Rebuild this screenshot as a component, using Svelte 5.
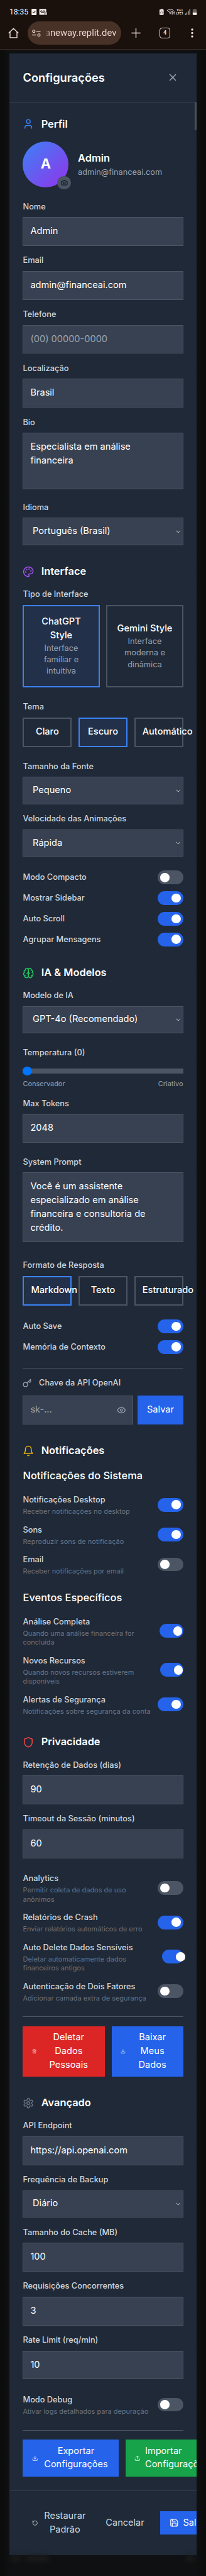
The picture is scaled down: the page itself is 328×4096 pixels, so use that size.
<script>
  const icons = {
    x: '<path d="M18 6 6 18"/><path d="m6 6 12 12"/>',
    user: '<path d="M19 21v-2a4 4 0 0 0-4-4H9a4 4 0 0 0-4 4v2"/><circle cx="12" cy="7" r="4"/>',
    camera: '<path d="M14.5 4h-5L7 7H4a2 2 0 0 0-2 2v9a2 2 0 0 0 2 2h16a2 2 0 0 0 2-2V9a2 2 0 0 0-2-2h-3l-2.5-3z"/><circle cx="12" cy="13" r="3"/>',
    palette: '<circle cx="13.5" cy="6.5" r=".5" fill="currentColor"/><circle cx="17.5" cy="10.5" r=".5" fill="currentColor"/><circle cx="8.5" cy="7.5" r=".5" fill="currentColor"/><circle cx="6.5" cy="12.5" r=".5" fill="currentColor"/><path d="M12 2C6.5 2 2 6.5 2 12s4.5 10 10 10c.926 0 1.648-.746 1.648-1.688 0-.437-.18-.835-.437-1.125-.29-.289-.438-.652-.438-1.125a1.64 1.64 0 0 1 1.668-1.668h1.996c3.051 0 5.555-2.503 5.555-5.554C21.965 6.012 17.461 2 12 2z"/>',
    brain: '<path d="M12 5a3 3 0 1 0-5.997.125 4 4 0 0 0-2.526 5.77 4 4 0 0 0 .556 6.588A4 4 0 1 0 12 18Z"/><path d="M12 5a3 3 0 1 1 5.997.125 4 4 0 0 1 2.526 5.77 4 4 0 0 1-.556 6.588A4 4 0 1 1 12 18Z"/><path d="M15 13a4.5 4.5 0 0 1-3-4 4.5 4.5 0 0 1-3 4"/><path d="M17.599 6.5a3 3 0 0 0 .399-1.375"/><path d="M6.003 5.125A3 3 0 0 0 6.401 6.5"/><path d="M3.477 10.896a4 4 0 0 1 .585-.396"/><path d="M19.938 10.5a4 4 0 0 1 .585.396"/><path d="M6 18a4 4 0 0 1-1.967-.516"/><path d="M19.967 17.484A4 4 0 0 1 18 18"/>',
    key: '<path d="m15.5 7.5 2.3 2.3a1 1 0 0 0 1.4 0l2.1-2.1a1 1 0 0 0 0-1.4L19 4"/><path d="m21 2-9.6 9.6"/><circle cx="7.5" cy="15.5" r="5.5"/>',
    eye: '<path d="M2.062 12.348a1 1 0 0 1 0-.696 10.75 10.75 0 0 1 19.876 0 1 1 0 0 1 0 .696 10.75 10.75 0 0 1-19.876 0"/><circle cx="12" cy="12" r="3"/>',
    bell: '<path d="M6 8a6 6 0 0 1 12 0c0 7 3 9 3 9H3s3-2 3-9"/><path d="M10.3 21a1.94 1.94 0 0 0 3.4 0"/>',
    shield: '<path d="M20 13c0 5-3.5 7.5-7.66 8.95a1 1 0 0 1-.67-.01C7.5 20.5 4 18 4 13V6a1 1 0 0 1 1-1c2 0 4.5-1.2 6.24-2.72a1.17 1.17 0 0 1 1.52 0C14.51 3.81 17 5 19 5a1 1 0 0 1 1 1z"/>',
    settings: '<path d="M12.22 2h-.44a2 2 0 0 0-2 2v.18a2 2 0 0 1-1 1.73l-.43.25a2 2 0 0 1-2 0l-.15-.08a2 2 0 0 0-2.73.73l-.22.38a2 2 0 0 0 .73 2.73l.15.1a2 2 0 0 1 1 1.72v.51a2 2 0 0 1-1 1.74l-.15.09a2 2 0 0 0-.73 2.73l.22.38a2 2 0 0 0 2.73.73l.15-.08a2 2 0 0 1 2 0l.43.25a2 2 0 0 1 1 1.73V20a2 2 0 0 0 2 2h.44a2 2 0 0 0 2-2v-.18a2 2 0 0 1 1-1.73l.43-.25a2 2 0 0 1 2 0l.15.08a2 2 0 0 0 2.73-.73l.22-.39a2 2 0 0 0-.73-2.73l-.15-.08a2 2 0 0 1-1-1.74v-.5a2 2 0 0 1 1-1.74l.15-.09a2 2 0 0 0 .73-2.73l-.22-.38a2 2 0 0 0-2.73-.73l-.15.08a2 2 0 0 1-2 0l-.43-.25a2 2 0 0 1-1-1.73V4a2 2 0 0 0-2-2z"/><circle cx="12" cy="12" r="3"/>',
    trash: '<path d="M3 6h18"/><path d="M19 6v14c0 1-1 2-2 2H7c-1 0-2-1-2-2V6"/><path d="M8 6V4c0-1 1-2 2-2h4c1 0 2 1 2 2v2"/><path d="M10 11v6"/><path d="M14 11v6"/>',
    download: '<path d="M21 15v4a2 2 0 0 1-2 2H5a2 2 0 0 1-2-2v-4"/><path d="m7 10 5 5 5-5"/><path d="M12 15V3"/>',
    upload: '<path d="M21 15v4a2 2 0 0 1-2 2H5a2 2 0 0 1-2-2v-4"/><path d="m17 8-5-5-5 5"/><path d="M12 3v12"/>',
    restore: '<path d="M3 12a9 9 0 1 0 9-9 9.75 9.75 0 0 0-6.74 2.74L3 8"/><path d="M3 3v5h5"/>',
    save: '<path d="M15.2 3a2 2 0 0 1 1.4.6l3.8 3.8a2 2 0 0 1 .6 1.4V19a2 2 0 0 1-2 2H5a2 2 0 0 1-2-2V5a2 2 0 0 1 2-2z"/><path d="M17 21v-7a1 1 0 0 0-1-1H8a1 1 0 0 0-1 1v7"/><path d="M7 3v4a1 1 0 0 0 1 1h7"/>'
  };

  const profileFields = [
    { label: 'Nome', value: 'Admin' },
    { label: 'Email', value: 'admin@financeai.com' },
    { label: 'Telefone', value: '(00) 00000-0000', empty: true },
    { label: 'Localização', value: 'Brasil' }
  ];
  const interfaceToggles = [
    { label: 'Modo Compacto', on: false },
    { label: 'Mostrar Sidebar', on: true },
    { label: 'Auto Scroll', on: true },
    { label: 'Agrupar Mensagens', on: true }
  ];
  const modelToggles = [
    { label: 'Auto Save', on: true },
    { label: 'Memória de Contexto', on: true }
  ];
  const systemNotices = [
    { label: 'Notificações Desktop', lines: ['Receber notificações no desktop'], on: true },
    { label: 'Sons', lines: ['Reproduzir sons de notificação'], on: true },
    { label: 'Email', lines: ['Receber notificações por email'], on: false }
  ];
  const eventNotices = [
    { label: 'Análise Completa', lines: ['Quando uma análise financeira for', 'concluída'], on: true, width: 41.5 },
    { label: 'Novos Recursos', lines: ['Quando novos recursos estiverem', 'disponíveis'], on: true, width: 40.2 },
    { label: 'Alertas de Segurança', lines: ['Notificações sobre segurança da conta'], on: true }
  ];
  const privacyToggles = [
    { label: 'Analytics', lines: ['Permitir coleta de dados de uso', 'anônimos'], on: false },
    { label: 'Relatórios de Crash', lines: ['Enviar relatórios automáticos de erro'], on: true },
    { label: 'Auto Delete Dados Sensíveis', lines: ['Deletar automaticamente dados', 'financeiros antigos'], on: true, width: 36.5 },
    { label: 'Autenticação de Dois Fatores', lines: ['Adicionar camada extra de segurança'], on: false }
  ];
  const debugToggle = [
    { label: 'Modo Debug', lines: ['Ativar logs detalhados para depuração'], on: false }
  ];
</script>

{#snippet icon(name, size, color)}
  <svg class="icon" viewBox="0 0 24 24" style="width:{size / 10}rem;height:{size / 10}rem;color:{color}">{@html icons[name]}</svg>
{/snippet}

{#snippet heading(name, color, text)}
  <h2>{@render icon(name, 20, color)}<span>{text}</span></h2>
{/snippet}

{#snippet field(label, value, empty = false)}
  <div class="field">
    <div class="label">{label}</div>
    <div class="input" class:empty>{value}</div>
  </div>
{/snippet}

{#snippet select(label, value)}
  <div class="field">
    <div class="label">{label}</div>
    <div class="select">
      <span>{value}</span>
      <svg class="chevron" viewBox="0 0 8 5"><path d="M.4.5 4 4.1 7.6.5" /></svg>
    </div>
  </div>
{/snippet}

{#snippet toggle(on, width = 44)}
  <span class="toggle" class:on style="width:{width / 10}rem"><i></i></span>
{/snippet}

{#snippet plainRows(rows)}
  <div class="rows">
    {#each rows as row}
      <div class="row"><span class="label">{row.label}</span>{@render toggle(row.on)}</div>
    {/each}
  </div>
{/snippet}

{#snippet detailRows(rows)}
  <div class="rows">
    {#each rows as row}
      <div class="row">
        <div class="detail">
          <span class="label">{row.label}</span>
          {#each row.lines as line}<p>{line}</p>{/each}
        </div>
        {@render toggle(row.on, row.width)}
      </div>
    {/each}
  </div>
{/snippet}

<div class="page">
  <div class="browser">
    <div class="status">
      <span class="clock">18:35</span>
      <svg class="left-icons" viewBox="0 0 26 10">
        <rect x=".2" y=".1" width="8" height="9.8" rx=".8" fill="#f2eeec" />
        <path d="m2.2 4.8 1.5 1.5 2.8-3" fill="none" stroke="#1a100c" stroke-width="1.1" />
        <rect x="12.6" y=".2" width="11" height="9.4" rx=".8" fill="#f2eeec" />
        <g fill="none" stroke="#1a100c" stroke-width=".9"><circle cx="15.9" cy="4.1" r="1.3" /><circle cx="20" cy="4.1" r="1.3" /><path d="M15.6 5.5h4.6" /></g>
        <rect x="20.6" y="5.2" width="4.4" height="4.6" rx=".6" fill="#f2eeec" stroke="#1a100c" stroke-width=".5" />
        <path d="M22.3 6.6h.7v2.2" fill="none" stroke="#1a100c" stroke-width=".6" />
      </svg>
      <svg class="right-icons" viewBox="0 0 60 10">
        <path d="M2 1V.2h3V1h.6q1 0 1 1v6.7q0 1-1 1H1q-1 0-1-1V2q0-1 1-1z" fill="#f2eeec" />
        <path d="M2.300 4.500 3.300 2.900 4.300 4.500M4.800 5.300l.7 1.500H4M3 6.800H1.200l.7-1.500" fill="none" stroke="#1a100c" stroke-width=".7" />
        <g fill="none" stroke="#f2eeec" stroke-width="1" stroke-linecap="round"><path d="M12.1 2.6q5-4 10 0M13.7 4.4q3.4-2.6 6.8 0M15.3 6.1q1.8-1.3 3.5 0" /><path d="M20.3 4.9v3.8m-1.1-1 1.1 1.1 1.1-1.1M23.2 8.6V4.8m-1.1 1L23.2 4.7l1.1 1.1" stroke-width=".8" /></g>
        <circle cx="17" cy="7.7" r=".8" fill="#f2eeec" />
        <text x="27.4" y="4.2" font-size="4.7" textLength="6.2">Vo</text>
        <path d="M34.4.9q1.1 1.6 0 3.2M35.9.5q1.5 2 0 4" fill="none" stroke="#f2eeec" stroke-width=".6" />
        <text x="26.3" y="9.2" font-size="5" textLength="11.5">LTE1</text>
        <path d="M41.3 9.2V8M43.6 9.2V6M45.9 9.2V3.5M48.2 9.2V.8" stroke="#f2eeec" stroke-width="1" stroke-linecap="round" />
        <path d="M54.600 1V.2h3V1h.8q1 0 1 1v4h-6.600V2q0-1 1-1z" fill="#6b5f5b" />
        <path d="M52.800 6h6.600v2.700q0 1-1 1h-4.600q-1 0-1-1z" fill="#fff" />
      </svg>
    </div>
    <div class="toolbar">
      <svg class="home" viewBox="0 0 17 17"><path d="M1.100 8.200 8.500 1.200l7.400 7M3 6.800v9.100h11V6.800" /></svg>
      <div class="url">
        <svg viewBox="0 0 14 11"><circle cx="2.800" cy="2.400" r="1.900" /><path d="M7 2.400h6.500M.3 8.400h6.400" /><circle cx="11" cy="8.400" r="1.900" /></svg>
        <span>aneway.replit.dev</span>
      </div>
      <svg class="plus" viewBox="0 0 15 15"><path d="M7.500.1v14.800M.4 7.500h14.200" /></svg>
      <span class="tabs">4</span>
      <svg class="dots" viewBox="0 0 4 15"><circle cx="2" cy="2" r="1.750" /><circle cx="2" cy="7.500" r="1.750" /><circle cx="2" cy="13" r="1.750" /></svg>
    </div>
  </div>

  <main>
    <header>
      <h1>Configurações</h1>
      <span class="close">{@render icon('x', 20, '#9ca3af')}</span>
    </header>

    <div class="body">
      <span class="scrollbar"></span>
      <section>
        {@render heading('user', '#3b82f6', 'Perfil')}
        <div class="profile">
          <div class="avatar">A<span class="photo">{@render icon('camera', 12, '#000')}</span></div>
          <div><strong>Admin</strong><p>admin@financeai.com</p></div>
        </div>
        <div class="group first">
          {#each profileFields as f}{@render field(f.label, f.value, f.empty)}{/each}
          <div class="field area">
            <div class="label">Bio</div>
            <div class="input bio">Especialista em análise<br />financeira</div>
          </div>
          {@render select('Idioma', 'Português (Brasil)')}
        </div>
      </section>

      <section>
        {@render heading('palette', '#a855f7', 'Interface')}
        <div class="stack">
          <div class="field">
            <div class="label">Tipo de Interface</div>
            <div class="cards">
              <div class="choice card active"><b>ChatGPT<br />Style</b><small>Interface<br />familiar e<br />intuitiva</small></div>
              <div class="choice card"><b>Gemini Style</b><small>Interface<br />moderna e<br />dinâmica</small></div>
            </div>
          </div>
          <div class="field">
            <div class="label">Tema</div>
            <div class="options">
              <div class="choice">Claro</div>
              <div class="choice active">Escuro</div>
              <div class="choice">Automático</div>
            </div>
          </div>
          <div class="group">
            {@render select('Tamanho da Fonte', 'Pequeno')}
            {@render select('Velocidade das Animações', 'Rápida')}
          </div>
          {@render plainRows(interfaceToggles)}
        </div>
      </section>

      <section>
        {@render heading('brain', '#22c55e', 'IA & Modelos')}
        <div class="stack">
          {@render select('Modelo de IA', 'GPT-4o (Recomendado)')}
          <div class="group">
            <div class="field">
              <div class="label">Temperatura (0)</div>
              <div class="slider"><i></i></div>
              <div class="scale"><span>Conservador</span><span>Criativo</span></div>
            </div>
            {@render field('Max Tokens', '2048')}
          </div>
          <div class="field area">
            <div class="label">System Prompt</div>
            <div class="input prompt">Você é um assistente<br />especializado em análise<br />financeira e consultoria de<br />crédito.</div>
          </div>
          <div class="field">
            <div class="label">Formato de Resposta</div>
            <div class="options">
              <div class="choice active">Markdown</div>
              <div class="choice">Texto</div>
              <div class="choice">Estruturado</div>
            </div>
          </div>
          {@render plainRows(modelToggles)}
          <div class="divided">
            <div class="key">{@render icon('key', 16, '#9ca3af')}<span class="label">Chave da API OpenAI</span></div>
            <div class="api">
              <div class="input empty"><span>sk-...</span>{@render icon('eye', 16, '#9ca3af')}</div>
              <div class="btn blue">Salvar</div>
            </div>
          </div>
        </div>
      </section>

      <section>
        {@render heading('bell', '#eab308', 'Notificações')}
        <div class="stack">
          <div><h3>Notificações do Sistema</h3>{@render detailRows(systemNotices)}</div>
          <div><h3>Eventos Específicos</h3>{@render detailRows(eventNotices)}</div>
        </div>
      </section>

      <section>
        {@render heading('shield', '#ef4444', 'Privacidade')}
        <div class="stack">
          <div class="group">
            {@render field('Retenção de Dados (dias)', '90')}
            {@render field('Timeout da Sessão (minutos)', '60')}
          </div>
          {@render detailRows(privacyToggles)}
          <div class="divided actions">
            <div class="btn red delete">{@render icon('trash', 8, '#fff')}<span>Deletar<br />Dados<br />Pessoais</span></div>
            <div class="btn blue fetch">{@render icon('download', 8.5, '#fff')}<span>Baixar<br />Meus<br />Dados</span></div>
          </div>
        </div>
      </section>

      <section>
        {@render heading('settings', '#6b7280', 'Avançado')}
        <div class="stack">
          <div class="group">
            {@render field('API Endpoint', 'https://api.openai.com')}
            {@render select('Frequência de Backup', 'Diário')}
            {@render field('Tamanho do Cache (MB)', '100')}
            {@render field('Requisições Concorrentes', '3')}
            {@render field('Rate Limit (req/min)', '10')}
          </div>
          {@render detailRows(debugToggle)}
          <div class="divided actions">
            <div class="btn blue export">{@render icon('download', 10.5, '#fff')}<span>Exportar<br />Configurações</span></div>
            <div class="btn green import">{@render icon('upload', 10.5, '#fff')}<span>Importar<br />Configurações</span></div>
          </div>
        </div>
      </section>
    </div>

    <footer>
      <div class="restore">{@render icon('restore', 10.5, '#d1d5db')}<span>Restaurar<br />Padrão</span></div>
      <div class="cancel">Cancelar</div>
      <div class="btn blue store">{@render icon('save', 16, '#fff')}<span>Salvar</span></div>
    </footer>
  </main>
  <div class="behind"><i></i><i></i><i></i></div>
</div>

<style>
  /* 1rem stands for ten layout pixels */
  :global(html) { font-size: 9.124px; }
  :global(body) { margin: 0; background: #0c0c0c; }
  .page, .page * { box-sizing: border-box; }
  .page {
    width: 328px;
    height: 4096px;
    overflow: hidden;
    font: 400 1.6rem/2.4rem Inter, sans-serif;
    color: #fff;
    background: linear-gradient(90deg, #0b0d0c, #0c0c0c 5px, #0f1011 14px, #0f1011 314px, #0c0c0c 323px, #0b0d0c);
  }
  p, h1, h2, h3 { margin: 0; }
  i { display: block; font-style: normal; }
  .icon { display: block; flex: none; fill: none; stroke: currentColor; stroke-width: 2; stroke-linecap: round; stroke-linejoin: round; }

  .browser { height: 79px; background: #1a100c; border-bottom: 1px solid #392b27; font-family: Roboto, sans-serif; }
  .status { display: flex; align-items: center; height: 33px; padding: 5px 14.5px 0 15px; }
  .status { height: 33.4px; }
  .clock { width: 34.5px; font-size: 12.1px; line-height: 14px; color: #f2eeec; }
  .left-icons { width: 26px; height: 10px; }
  .right-icons { width: 60px; height: 10px; margin-left: auto; }
  .right-icons text { fill: #f2eeec; font-family: Roboto, sans-serif; font-weight: 700; }
  .toolbar { display: flex; align-items: center; height: 38px; color: #efdcd5; }
  .toolbar svg { display: block; flex: none; fill: none; stroke: #efdcd5; stroke-width: 1.4; }
  .toolbar .home { width: 17px; height: 17px; margin-left: 13.4px; }
  .home path { stroke-linejoin: round; stroke-linecap: round; }
  .url { display: flex; align-items: center; flex: none; width: 149.3px; height: 37.6px; margin-left: 13.4px; padding-left: 7.5px; border-radius: 19px; background: #483228; }
  .url svg { width: 14px; height: 11.5px; stroke-width: 1.2; }
  .url span { margin-left: 6.6px; font-size: 14.8px; line-height: 20px; white-space: nowrap; background: linear-gradient(90deg, #48322800, #efdcd5 9px); background-clip: text; color: transparent; }
  .plus { width: 15px; height: 15px; margin-left: 16.2px; }
  .tabs { flex: none; width: 16.8px; height: 17px; margin-left: 30px; border: 1.5px solid #efdcd5; border-radius: 4px; font-size: 9px; font-weight: 700; line-height: 15px; text-align: center; }
  .toolbar .dots { width: 4px; height: 15px; margin-left: 33.3px; fill: #efdcd5; stroke: none; }

  main { margin: 6.2px 1.6rem 0; overflow: hidden; background: #1f2937; }
  header { display: flex; align-items: center; justify-content: space-between; height: 8.5rem; padding: 0 3.2rem 0 2.4rem; border-bottom: 1px solid #374151; }
  h1 { font-size: 2rem; font-weight: 600; line-height: 2.8rem; }
  .body { position: relative; padding: 2.4rem; }
  .scrollbar { position: absolute; top: 0; right: 0; width: 3.6px; height: 44.5px; background: #4d5257; }
  section + section { margin-top: 3.2rem; }
  h2 { display: flex; align-items: center; gap: 1.2rem; height: 2.8rem; margin-bottom: 1.6rem; font-size: 1.8rem; font-weight: 600; line-height: 2.8rem; }
  h3 { margin-bottom: 1.6rem; font-size: 1.8rem; font-weight: 500; line-height: 2.8rem; }
  .stack { display: flex; flex-direction: column; gap: 2.4rem; }
  .group { display: flex; flex-direction: column; gap: 1.6rem; }
  .first { margin-top: 2.4rem; }

  .profile { display: flex; align-items: center; gap: 1.6rem; }
  .avatar { position: relative; display: grid; place-items: center; width: 8rem; height: 8rem; border-radius: 50%; background: linear-gradient(135deg, #3b82f6, #9333ea); font-size: 2.4rem; font-weight: 700; }
  .photo { position: absolute; right: -.4rem; bottom: -.4rem; display: grid; place-items: center; width: 2.4rem; height: 2.4rem; border-radius: 50%; background: #4b5563; }
  .profile strong { display: block; font-size: 1.8rem; font-weight: 600; line-height: 2.8rem; }
  .profile p { font-size: 1.4rem; line-height: 2rem; color: #9ca3af; }

  .label { font-size: 1.4rem; font-weight: 500; line-height: 2rem; color: #d1d5db; white-space: nowrap; }
  .field > .label { margin-bottom: .8rem; }
  .area { margin-bottom: .63rem; }
  .input { height: 5rem; padding: 1.2rem; border: 1px solid #4b5563; background: #374151; white-space: nowrap; }
  .bio { height: 9.8rem; }
  .prompt { height: 12.2rem; }
  .empty { color: #9ca3af; }
  .select { display: flex; align-items: center; justify-content: space-between; height: 4.76rem; padding: 0 .35rem 0 1.6rem; border: 1px solid #4b5563; background: #374151; }
  .chevron { width: 7.5px; height: 5px; fill: none; stroke: #e5e7eb; stroke-width: .9; }

  .cards { display: grid; grid-template-columns: 1fr 1fr; gap: 1.2rem; }
  .options { display: grid; grid-template-columns: repeat(3, minmax(0, 1fr)); gap: 1.2rem; }
  .choice { display: flex; align-items: center; justify-content: safe center; height: 5.2rem; padding: 0 1.2rem; border: 2px solid #4b5563; font-weight: 500; white-space: nowrap; }
  .choice.active { border-color: #3b82f6; background: #22304a; }
  .card { flex-direction: column; justify-content: center; height: 14.4rem; text-align: center; }
  .card b { font-weight: 500; }
  .card small { font-size: 1.4rem; font-weight: 400; line-height: 2rem; color: #9ca3af; }

  .rows { display: flex; flex-direction: column; gap: 1.2rem; }
  .row { display: flex; align-items: center; justify-content: space-between; }
  .detail p { font-size: 1.2rem; line-height: 1.6rem; color: #6b7280; white-space: nowrap; }
  .toggle { display: block; flex: none; height: 2.4rem; padding: .4rem; border-radius: 1.2rem; background: #4b5563; }
  .toggle i { width: 1.6rem; height: 1.6rem; border-radius: 50%; background: #fff; }
  .toggle.on { background: #2563eb; }
  .toggle.on i { margin-left: 2rem; }

  .slider { height: 2.84rem; padding-top: .98rem; }
  .slider::before { content: ''; display: block; height: .8rem; background: #4b5563; }
  .slider i { width: 1.6rem; height: 1.6rem; margin-top: -1.2rem; border-radius: 50%; background: #0075ff; }
  .scale { display: flex; justify-content: space-between; font-size: 1.2rem; line-height: 1.6rem; color: #9ca3af; }

  .divided { padding-top: 1.6rem; border-top: 1px solid #4b5563; }
  .key { display: flex; align-items: center; gap: 1.2rem; height: 2rem; margin-bottom: 1.2rem; }
  .api { display: flex; gap: .8rem; }
  .api .input { display: flex; align-items: center; justify-content: space-between; flex: 1; }
  .api .btn { width: 7.9rem; justify-content: center; }
  .btn { display: flex; align-items: center; flex: none; white-space: nowrap; }
  .btn span { text-align: center; }
  .blue { background: #2563eb; }
  .red { background: #dc2626; }
  .green { background: #16a34a; }
  .actions { display: flex; gap: 1.15rem; }
  .delete { width: 14.33rem; height: 8.8rem; padding-left: 1.62rem; }
  .delete span { margin-left: 2.2rem; }
  .actions .fetch { flex: 1; padding-left: 1.6rem; }
  .fetch span { margin-left: 2.25rem; }
  .export { width: 16.72rem; height: 6.4rem; padding-left: 1.6rem; }
  .export span { margin-left: 1.05rem; }
  .import { width: 16.72rem; padding-left: 1.6rem; }
  .import span { margin-left: .8rem; text-align: left; }

  footer { display: flex; align-items: center; height: 11.3rem; padding-left: 4rem; border-top: 1px solid #374151; color: #d1d5db; white-space: nowrap; }
  .restore { display: flex; align-items: center; flex: none; width: 12.85rem; }
  .restore span { margin-left: 1.05rem; text-align: center; }
  .cancel { flex: none; width: 9.5rem; }
  .store { width: 12rem; height: 4rem; padding-left: 1.6rem; color: #fff; }
  .store span { margin-left: .8rem; }

  .behind { display: flex; gap: 12px; padding: 1px 19px; filter: blur(4px); }
  .behind i { width: 12px; height: 8px; background: #1e1e1e; }
  .behind i:nth-child(2) { width: 34px; }
  .behind i:nth-child(3) { margin-left: auto; }
</style>
